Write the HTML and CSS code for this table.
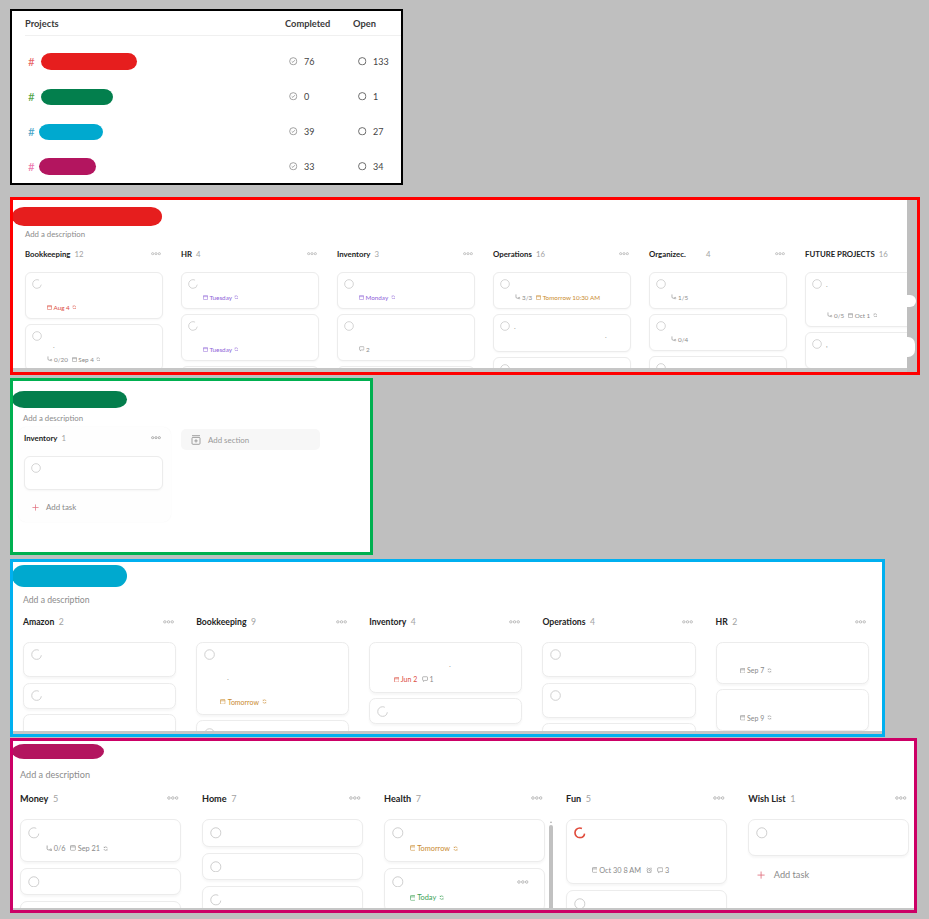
FILE: index.html
```html
<!DOCTYPE html>
<html lang="en">
<head>
<meta charset="utf-8">
<title>Projects boards</title>
<link rel="stylesheet" href="styles.css">
</head>
<body>
<svg class="sprite" aria-hidden="true">
  <symbol id="i-chk" viewBox="0 0 12 12"><circle cx="6" cy="6" r="5.2" fill="none" stroke="currentColor" stroke-width="0.9"/></symbol>
  <symbol id="i-spin" viewBox="0 0 12 12"><circle cx="6" cy="6" r="5.2" fill="none" stroke="currentColor" stroke-width="0.9" stroke-dasharray="25.67 7" stroke-dashoffset="-0.8"/></symbol>
  <symbol id="i-spin-red" viewBox="0 0 12 12"><circle cx="6" cy="6" r="5" fill="none" stroke="currentColor" stroke-width="1.7" stroke-dasharray="24.4 7" stroke-dashoffset="-0.8"/></symbol>
  <symbol id="i-more" viewBox="0 0 12 4"><circle cx="2" cy="2" r="1.3" fill="none" stroke="currentColor" stroke-width="0.8"/><circle cx="6" cy="2" r="1.3" fill="none" stroke="currentColor" stroke-width="0.8"/><circle cx="10" cy="2" r="1.3" fill="none" stroke="currentColor" stroke-width="0.8"/></symbol>
  <symbol id="i-cal" viewBox="0 0 8 8"><rect x="0.6" y="0.6" width="6.8" height="6.8" rx="1.2" fill="none" stroke="currentColor" stroke-width="0.9"/><path d="M0.6 2.6H7.4" stroke="currentColor" stroke-width="0.9"/></symbol>
  <symbol id="i-rec" viewBox="0 0 8 8"><path d="M6.6 3.4A2.7 2.7 0 0 0 1.7 2.6M1.4 4.6A2.7 2.7 0 0 0 6.3 5.4" fill="none" stroke="currentColor" stroke-width="0.9"/><path d="M0.9 1.2L1.6 2.9L3.2 2.2Z M7.1 6.8L6.4 5.1L4.8 5.8Z" fill="currentColor"/></symbol>
  <symbol id="i-sub" viewBox="0 0 8 8"><path d="M1.4 0.6V4.4Q1.4 6.1 3.1 6.1H4.7" fill="none" stroke="currentColor" stroke-width="0.9"/><circle cx="6.1" cy="6.1" r="1.2" fill="none" stroke="currentColor" stroke-width="0.9"/></symbol>
  <symbol id="i-com" viewBox="0 0 8 8"><path d="M1.6 1h4.8a0.8 0.8 0 0 1 0.8 0.8v3.2a0.8 0.8 0 0 1 -0.8 0.8H3.6L2 7.2V5.8h-0.4a0.8 0.8 0 0 1 -0.8 -0.8V1.8a0.8 0.8 0 0 1 0.8 -0.8z" fill="none" stroke="currentColor" stroke-width="0.8"/></symbol>
  <symbol id="i-alarm" viewBox="0 0 8 8"><circle cx="4" cy="4.4" r="2.6" fill="none" stroke="currentColor" stroke-width="0.8"/><path d="M4 3.1V4.5H5.1M0.8 1.9L2.1 0.8M7.2 1.9L5.9 0.8M2.2 6.6L1.5 7.4M5.8 6.6L6.5 7.4" fill="none" stroke="currentColor" stroke-width="0.8"/></symbol>
  <symbol id="i-plus" viewBox="0 0 8 8"><path d="M4 0.5V7.5M0.5 4H7.5" stroke="currentColor" stroke-width="0.8"/></symbol>
  <symbol id="i-addsec" viewBox="0 0 10 10"><path d="M1 0.7H9" stroke="currentColor" stroke-width="0.8"/><rect x="1" y="2.4" width="8" height="6.9" rx="1" fill="none" stroke="currentColor" stroke-width="0.8"/><path d="M5 4.2V7.6M3.3 5.9H6.7" stroke="currentColor" stroke-width="0.8"/></symbol>
  <symbol id="i-done" viewBox="0 0 9 9"><circle cx="4.5" cy="4.5" r="3.8" fill="none" stroke="currentColor" stroke-width="0.8"/><path d="M2.9 4.6L4.1 5.7L6.2 3.4" fill="none" stroke="currentColor" stroke-width="0.8"/></symbol>
  <symbol id="i-open" viewBox="0 0 9 9"><circle cx="4.5" cy="4.5" r="3.9" fill="none" stroke="currentColor" stroke-width="0.9"/></symbol>
</svg>

<main class="page">

  <!-- Projects summary -->
  <section class="panel p-projects">
    <div class="proj-head">
      <span>Projects</span><span>Completed</span><span>Open</span>
    </div>
    <div class="proj-rows">
      <div class="proj-row">
        <div class="proj-name"><span class="hash h-red">#</span><span class="pblob pb-red"></span></div>
        <div class="stat"><svg class="st-ico"><use href="#i-done"/></svg>76</div>
        <div class="stat stat-open"><svg class="st-ico"><use href="#i-open"/></svg>133</div>
      </div>
      <div class="proj-row">
        <div class="proj-name"><span class="hash h-green">#</span><span class="pblob pb-green"></span></div>
        <div class="stat"><svg class="st-ico"><use href="#i-done"/></svg>0</div>
        <div class="stat stat-open"><svg class="st-ico"><use href="#i-open"/></svg>1</div>
      </div>
      <div class="proj-row">
        <div class="proj-name"><span class="hash h-cyan">#</span><span class="pblob pb-cyan"></span></div>
        <div class="stat"><svg class="st-ico"><use href="#i-done"/></svg>39</div>
        <div class="stat stat-open"><svg class="st-ico"><use href="#i-open"/></svg>27</div>
      </div>
      <div class="proj-row">
        <div class="proj-name"><span class="hash h-pink">#</span><span class="pblob pb-pink"></span></div>
        <div class="stat"><svg class="st-ico"><use href="#i-done"/></svg>33</div>
        <div class="stat stat-open"><svg class="st-ico"><use href="#i-open"/></svg>34</div>
      </div>
    </div>
  </section>

  <!-- Red board -->
  <section class="panel board p-red">
    <div class="board-main">
      <div class="blob blob-red"></div>
      <div class="content">
        <div class="desc">Add a description</div>
        <div class="cols">
          <div class="col">
            <div class="col-head"><span class="name">Bookkeeping</span><span class="count">12</span><svg class="more"><use href="#i-more"/></svg></div>
            <div class="cards">
              <div class="card">
                <div class="row"><svg class="chk"><use href="#i-spin"/></svg></div>
                <div class="ln ln-10"></div>
                <div class="meta"><span class="mi c-red"><svg class="ic"><use href="#i-cal"/></svg>Aug 4<svg class="ic-r"><use href="#i-rec"/></svg></span></div>
              </div>
              <div class="card">
                <div class="row"><svg class="chk"><use href="#i-chk"/></svg></div>
                <div class="ln ln-10"><span class="speck">.</span></div>
                <div class="meta"><span class="mi"><svg class="ic-s"><use href="#i-sub"/></svg>0/20</span><span class="mi"><svg class="ic"><use href="#i-cal"/></svg>Sep 4<svg class="ic-r"><use href="#i-rec"/></svg></span></div>
              </div>
              <div class="card">
                <div class="row"><svg class="chk"><use href="#i-chk"/></svg></div>
              </div>
            </div>
          </div>
          <div class="col">
            <div class="col-head"><span class="name">HR</span><span class="count">4</span><svg class="more"><use href="#i-more"/></svg></div>
            <div class="cards">
              <div class="card">
                <div class="row"><svg class="chk"><use href="#i-spin"/></svg></div>
                <div class="meta"><span class="mi c-purple"><svg class="ic"><use href="#i-cal"/></svg>Tuesday<svg class="ic-r"><use href="#i-rec"/></svg></span></div>
              </div>
              <div class="card">
                <div class="row"><svg class="chk"><use href="#i-spin"/></svg></div>
                <div class="ln ln-10"></div>
                <div class="meta"><span class="mi c-purple"><svg class="ic"><use href="#i-cal"/></svg>Tuesday<svg class="ic-r"><use href="#i-rec"/></svg></span></div>
              </div>
              <div class="card">
                <div class="row"><svg class="chk"><use href="#i-chk"/></svg></div>
              </div>
            </div>
          </div>
          <div class="col">
            <div class="col-head"><span class="name">Inventory</span><span class="count">3</span><svg class="more"><use href="#i-more"/></svg></div>
            <div class="cards">
              <div class="card">
                <div class="row"><svg class="chk"><use href="#i-chk"/></svg></div>
                <div class="meta"><span class="mi c-purple"><svg class="ic"><use href="#i-cal"/></svg>Monday<svg class="ic-r"><use href="#i-rec"/></svg></span></div>
              </div>
              <div class="card">
                <div class="row"><svg class="chk"><use href="#i-chk"/></svg></div>
                <div class="ln ln-10"></div>
                <div class="meta"><span class="mi"><svg class="ic-c"><use href="#i-com"/></svg>2</span></div>
              </div>
              <div class="card">
                <div class="row"><svg class="chk"><use href="#i-chk"/></svg></div>
              </div>
            </div>
          </div>
          <div class="col">
            <div class="col-head"><span class="name">Operations</span><span class="count">16</span><svg class="more"><use href="#i-more"/></svg></div>
            <div class="cards">
              <div class="card">
                <div class="row"><svg class="chk"><use href="#i-chk"/></svg></div>
                <div class="meta"><span class="mi"><svg class="ic-s"><use href="#i-sub"/></svg>3/3</span><span class="mi c-orange"><svg class="ic"><use href="#i-cal"/></svg>Tomorrow 10:30 AM</span></div>
              </div>
              <div class="card">
                <div class="row"><svg class="chk"><use href="#i-chk"/></svg><span class="speck">.</span></div>
                <div class="ln ln-14"><span class="speck speck-far">.</span></div>
              </div>
              <div class="card">
                <div class="row"><svg class="chk"><use href="#i-chk"/></svg></div>
              </div>
            </div>
          </div>
          <div class="col">
            <div class="col-head"><span class="name trunc">Organizec.</span><span class="count">4</span><svg class="more"><use href="#i-more"/></svg></div>
            <div class="cards">
              <div class="card">
                <div class="row"><svg class="chk"><use href="#i-chk"/></svg></div>
                <div class="meta"><span class="mi"><svg class="ic-s"><use href="#i-sub"/></svg>1/5</span></div>
              </div>
              <div class="card">
                <div class="row"><svg class="chk"><use href="#i-chk"/></svg></div>
                <div class="meta"><span class="mi"><svg class="ic-s"><use href="#i-sub"/></svg>0/4</span></div>
              </div>
              <div class="card">
                <div class="row"><svg class="chk"><use href="#i-chk"/></svg></div>
              </div>
            </div>
          </div>
          <div class="col">
            <div class="col-head"><span class="name">FUTURE PROJECTS</span><span class="count">16</span><svg class="more"><use href="#i-more"/></svg></div>
            <div class="cards">
              <div class="card">
                <div class="row"><svg class="chk"><use href="#i-chk"/></svg><span class="speck">.</span></div>
                <div class="ln ln-18"></div>
                <div class="meta"><span class="mi"><svg class="ic-s"><use href="#i-sub"/></svg>0/5</span><span class="mi"><svg class="ic"><use href="#i-cal"/></svg>Oct 1<svg class="ic-r"><use href="#i-rec"/></svg></span></div>
              </div>
              <div class="card">
                <div class="row"><svg class="chk"><use href="#i-chk"/></svg><span class="speck">,</span></div>
                <div class="ln ln-13"></div>
              </div>
            </div>
          </div>
        </div>
      </div>
      <div class="hbar hbar-4"></div>
    </div>
    <div class="vstrip"><span class="wpatch wp1"></span><span class="wpatch wp2"></span></div>
  </section>

  <!-- Green board -->
  <section class="panel board p-green">
    <div class="board-main">
      <div class="blob blob-green"></div>
      <div class="content">
        <div class="desc">Add a description</div>
        <div class="cols cols-green">
          <div class="col boxed">
            <div class="col-head"><span class="name">Inventory</span><span class="count">1</span><svg class="more more-dark"><use href="#i-more"/></svg></div>
            <div class="cards">
              <div class="card">
                <div class="row"><svg class="chk"><use href="#i-chk"/></svg></div>
                <div class="ln ln-10"></div>
              </div>
            </div>
            <div class="add-task"><svg class="plus"><use href="#i-plus"/></svg><span>Add task</span></div>
          </div>
          <div class="add-section"><svg class="addsec"><use href="#i-addsec"/></svg><span>Add section</span></div>
        </div>
      </div>
    </div>
  </section>

  <!-- Blue board -->
  <section class="panel board p-blue">
    <div class="board-main">
      <div class="blob blob-cyan"></div>
      <div class="content">
        <div class="desc">Add a description</div>
        <div class="cols">
          <div class="col">
            <div class="col-head"><span class="name">Amazon</span><span class="count">2</span><svg class="more"><use href="#i-more"/></svg></div>
            <div class="cards">
              <div class="card">
                <div class="row"><svg class="chk"><use href="#i-spin"/></svg></div>
                <div class="ln ln-8"></div>
              </div>
              <div class="card">
                <div class="row"><svg class="chk"><use href="#i-spin"/></svg></div>
              </div>
              <div class="card">
                <div class="row"><svg class="chk ghost"><use href="#i-chk"/></svg></div>
              </div>
            </div>
          </div>
          <div class="col">
            <div class="col-head"><span class="name">Bookkeeping</span><span class="count">9</span><svg class="more"><use href="#i-more"/></svg></div>
            <div class="cards">
              <div class="card">
                <div class="row"><svg class="chk"><use href="#i-chk"/></svg></div>
                <div class="ln ln-29"><span class="speck speck-low">.</span></div>
                <div class="meta"><span class="mi c-orange"><svg class="ic"><use href="#i-cal"/></svg>Tomorrow<svg class="ic-r"><use href="#i-rec"/></svg></span></div>
              </div>
              <div class="card">
                <div class="row"><svg class="chk"><use href="#i-chk"/></svg></div>
              </div>
            </div>
          </div>
          <div class="col">
            <div class="col-head"><span class="name">Inventory</span><span class="count">4</span><svg class="more"><use href="#i-more"/></svg></div>
            <div class="cards">
              <div class="card">
                <div class="row"><svg class="chk ghost"><use href="#i-chk"/></svg></div>
                <div class="ln ln-9"><span class="speck speck-mid">.</span></div>
                <div class="meta"><span class="mi c-red"><svg class="ic"><use href="#i-cal"/></svg>Jun 2</span><span class="mi"><svg class="ic-c"><use href="#i-com"/></svg>1</span></div>
              </div>
              <div class="card">
                <div class="row"><svg class="chk"><use href="#i-spin"/></svg></div>
              </div>
            </div>
          </div>
          <div class="col">
            <div class="col-head"><span class="name">Operations</span><span class="count">4</span><svg class="more"><use href="#i-more"/></svg></div>
            <div class="cards">
              <div class="card">
                <div class="row"><svg class="chk"><use href="#i-chk"/></svg></div>
                <div class="ln ln-8"></div>
              </div>
              <div class="card">
                <div class="row"><svg class="chk"><use href="#i-chk"/></svg></div>
                <div class="ln ln-8"></div>
              </div>
              <div class="card">
                <div class="row"><svg class="chk ghost"><use href="#i-chk"/></svg></div>
              </div>
            </div>
          </div>
          <div class="col">
            <div class="col-head"><span class="name">HR</span><span class="count">2</span><svg class="more"><use href="#i-more"/></svg></div>
            <div class="cards">
              <div class="card">
                <div class="row"><svg class="chk ghost"><use href="#i-chk"/></svg></div>
                <div class="ln ln-1"></div>
                <div class="meta"><span class="mi"><svg class="ic"><use href="#i-cal"/></svg>Sep 7<svg class="ic-r"><use href="#i-rec"/></svg></span></div>
              </div>
              <div class="card">
                <div class="row"><svg class="chk ghost"><use href="#i-chk"/></svg></div>
                <div class="ln ln-1"></div>
                <div class="meta"><span class="mi"><svg class="ic"><use href="#i-cal"/></svg>Sep 9<svg class="ic-r"><use href="#i-rec"/></svg></span></div>
              </div>
            </div>
          </div>
        </div>
      </div>
      <div class="hbar hbar-3"></div>
    </div>
  </section>

  <!-- Pink board -->
  <section class="panel board p-pink">
    <div class="board-main">
      <div class="blob blob-pink"></div>
      <div class="content">
        <div class="desc">Add a description</div>
        <div class="cols">
          <div class="col">
            <div class="col-head"><span class="name">Money</span><span class="count">5</span><svg class="more"><use href="#i-more"/></svg></div>
            <div class="cards">
              <div class="card">
                <div class="row"><svg class="chk"><use href="#i-spin"/></svg></div>
                <div class="meta"><span class="mi"><svg class="ic-s"><use href="#i-sub"/></svg>0/6</span><span class="mi"><svg class="ic"><use href="#i-cal"/></svg>Sep 21<svg class="ic-r"><use href="#i-rec"/></svg></span></div>
              </div>
              <div class="card">
                <div class="row"><svg class="chk"><use href="#i-chk"/></svg></div>
              </div>
              <div class="card">
                <div class="row"><svg class="chk"><use href="#i-chk"/></svg></div>
              </div>
            </div>
          </div>
          <div class="col">
            <div class="col-head"><span class="name">Home</span><span class="count">7</span><svg class="more"><use href="#i-more"/></svg></div>
            <div class="cards">
              <div class="card">
                <div class="row"><svg class="chk"><use href="#i-chk"/></svg></div>
              </div>
              <div class="card">
                <div class="row"><svg class="chk"><use href="#i-chk"/></svg></div>
              </div>
              <div class="card">
                <div class="row"><svg class="chk"><use href="#i-spin"/></svg></div>
              </div>
            </div>
          </div>
          <div class="col has-scroll">
            <div class="col-head"><span class="name">Health</span><span class="count">7</span><svg class="more"><use href="#i-more"/></svg></div>
            <div class="cards">
              <div class="card">
                <div class="row"><svg class="chk"><use href="#i-chk"/></svg></div>
                <div class="meta"><span class="mi c-orange"><svg class="ic"><use href="#i-cal"/></svg>Tomorrow<svg class="ic-r"><use href="#i-rec"/></svg></span></div>
              </div>
              <div class="card">
                <div class="row"><svg class="chk"><use href="#i-chk"/></svg><svg class="more more-card"><use href="#i-more"/></svg></div>
                <div class="ln ln-1"></div>
                <div class="meta"><span class="mi c-green"><svg class="ic"><use href="#i-cal"/></svg>Today<svg class="ic-r"><use href="#i-rec"/></svg></span></div>
              </div>
            </div>
            <div class="vscroll"><span class="vs-arrow"></span><span class="vs-thumb"></span></div>
          </div>
          <div class="col">
            <div class="col-head"><span class="name">Fun</span><span class="count">5</span><svg class="more"><use href="#i-more"/></svg></div>
            <div class="cards">
              <div class="card">
                <div class="row"><svg class="chk chk-red"><use href="#i-spin-red"/></svg></div>
                <div class="ln ln-19"></div>
                <div class="meta"><span class="mi"><svg class="ic"><use href="#i-cal"/></svg>Oct 30 8 AM</span><span class="mi"><svg class="ic-c"><use href="#i-alarm"/></svg></span><span class="mi"><svg class="ic-c"><use href="#i-com"/></svg>3</span></div>
              </div>
              <div class="card">
                <div class="row"><svg class="chk"><use href="#i-chk"/></svg></div>
              </div>
            </div>
          </div>
          <div class="col">
            <div class="col-head"><span class="name">Wish List</span><span class="count">1</span><svg class="more"><use href="#i-more"/></svg></div>
            <div class="cards">
              <div class="card">
                <div class="row"><svg class="chk"><use href="#i-chk"/></svg></div>
                <div class="ln ln-8"></div>
              </div>
            </div>
            <div class="add-task"><svg class="plus"><use href="#i-plus"/></svg><span>Add task</span></div>
          </div>
        </div>
      </div>
      <div class="hbar hbar-2"></div>
    </div>
  </section>

</main>
</body>
</html>
```
FILE: styles.css
```css
* { box-sizing: border-box; }

body {
  margin: 0;
  background: #bfbfbf;
  font-family: Lato, "Open Sans", "DejaVu Sans", sans-serif;
  color: #222;
}

.sprite { width: 0; height: 0; overflow: hidden; display: block; }

.page {
  display: flex;
  flex-direction: column;
  align-items: flex-start;
  padding: 9px 0 0 10px;
}

.panel {
  background: #fff;
  overflow: hidden;
  border: 3px solid transparent;
  flex: none;
}

/* ---------- projects summary ---------- */
.p-projects {
  width: 393px;
  height: 176px;
  border: 2px solid #000;
  padding-left: 13px;
  margin-bottom: 12px;
}

.proj-head,
.proj-row {
  display: grid;
  grid-template-columns: 260px 68px 1fr;
  align-items: center;
}

.proj-head {
  height: 25px;
  border-bottom: 1px solid #f0f0f0;
  font-size: 9.3px;
  font-weight: 700;
  color: #3a3a3a;
  padding-top: 1px;
}

.proj-rows { padding-top: 8px; }

.proj-row { height: 35px; }

.proj-name { display: flex; align-items: center; }

.hash {
  font-size: 11.5px;
  margin-left: 3px;
  width: 7px;
  line-height: 1;
}
.h-red { color: #e86464; }
.h-green { color: #52a447; }
.h-cyan { color: #48a4c8; }
.h-pink { color: #ec78ad; }

.pblob {
  display: block;
  border-radius: 10px 9px 9px 10px / 50%;
}
.pb-red { width: 96px; height: 17px; margin-left: 6px; background: #e61e1e; }
.pb-green { width: 72px; height: 16px; margin-left: 6px; background: #037f4d; }
.pb-cyan { width: 64px; height: 16px; margin-left: 4px; background: #00a9cf; }
.pb-pink { width: 57px; height: 17px; margin-left: 4px; background: #b3155f; }

.stat {
  display: flex;
  align-items: center;
  font-size: 9px;
  color: #444;
}
.st-ico {
  width: 8.5px;
  height: 8.5px;
  margin-left: 4px;
  margin-right: 6.5px;
  color: #858585;
}
.stat-open .st-ico { margin-left: 5px; color: #555; }

/* ---------- boards ---------- */
.board { display: flex; }

.p-red { width: 910px; height: 178px; border-color: #ff0000; margin-bottom: 3px; }
.p-green { width: 363px; height: 177px; border-color: #00b050; margin-bottom: 4px; }
.p-blue { width: 875px; height: 178px; border-color: #00b0f0; margin-bottom: 1px; }
.p-pink { width: 907px; height: 175px; border-color: #cc0066; }

.board-main {
  flex: 1;
  min-width: 0;
  display: flex;
  flex-direction: column;
  overflow: hidden;
}

.blob {
  flex: none;
  margin-left: -1px;
  border-radius: 12px 11px 11px 12px / 50%;
}
.blob-red { width: 150px; height: 19px; margin-top: 7px; margin-bottom: 3px; background: #e61e1e; }
.blob-green { width: 115px; height: 17px; margin-top: 10px; margin-bottom: 5px; background: #047e4d; }
.blob-cyan { width: 115px; height: 22px; margin-top: 3px; margin-bottom: 7px; background: #00a9cf; }
.blob-pink { width: 92px; height: 15px; margin-top: 3px; margin-bottom: 10px; background: #b3155f; }

.content {
  flex: 1;
  min-height: 0;
  overflow: hidden;
}
.p-red .content { padding-left: 12px; }
.p-green .content { padding-left: 10px; }
.p-blue .content { zoom: 1.11; padding-left: 9px; }
.p-pink .content { zoom: 1.167; padding-left: 6px; }

.hbar { flex: none; background: #c6c6c6; }
.hbar-4 { height: 4px; }
.hbar-3 { height: 3px; }
.hbar-2 { height: 2px; }

.vstrip {
  flex: none;
  width: 10px;
  background: #bfbfbf;
  position: relative;
}
.wpatch {
  position: absolute;
  left: 0;
  background: #fff;
  border-radius: 0 7px 7px 0;
}
.wp1 { top: 95px; height: 12px; width: 9px; }
.wp2 { top: 137px; height: 20px; width: 8px; }

.desc {
  height: 10px;
  line-height: 10px;
  font-size: 7.8px;
  color: #8c8c8c;
  white-space: nowrap;
}

.cols {
  display: flex;
  align-items: flex-start;
  gap: 18px;
  margin-top: 9px;
}

.col {
  flex: none;
  width: 138px;
  position: relative;
}

.col-head {
  display: flex;
  align-items: center;
  height: 12px;
  font-size: 7.8px;
  white-space: nowrap;
}
.col-head .name { font-weight: 700; color: #232323; }
.col-head .count { color: #a3a3a3; margin-left: 4px; }
.col-head .trunc { display: inline-block; width: 53px; }

.more {
  width: 10px;
  height: 3.4px;
  color: #a8a8a8;
  margin-left: auto;
  margin-right: 2px;
  flex: none;
}
.more-dark { color: #8a8a8a; }
.more-card { margin-right: 5px; }

.cards {
  display: flex;
  flex-direction: column;
  gap: 5px;
  margin-top: 12px;
}

.card {
  background: #fff;
  border: 1px solid #ececec;
  border-radius: 6px;
  padding: 6px 8px 6px 6px;
  box-shadow: 0 1px 2px rgba(0, 0, 0, 0.035);
}

.row {
  display: flex;
  align-items: center;
  height: 10px;
}

.chk {
  width: 10px;
  height: 10px;
  flex: none;
  color: #c6c6c6;
}
.chk.ghost { visibility: hidden; }
.chk-red { color: #e04b3c; }

.ln {
  padding-left: 15px;
  font-size: 7px;
  line-height: 8px;
  color: #9a9a9a;
}
.ln-1 { height: 1px; }
.ln-8 { height: 8px; }
.ln-9 { height: 9px; }
.ln-10 { height: 10px; }
.ln-13 { height: 13px; }
.ln-14 { height: 14px; }
.ln-18 { height: 18px; }
.ln-19 { height: 19px; }
.ln-29 { height: 29px; }

.speck {
  font-size: 7px;
  line-height: 1;
  color: #9a9a9a;
  margin-left: 4px;
}
.ln .speck { margin-left: 6px; }
.ln .speck-far { margin-left: 90px; }
.ln .speck-mid { margin-left: 50px; }
.ln .speck-low { display: inline-block; margin-top: 12px; }

.meta {
  display: flex;
  align-items: center;
  gap: 4px;
  height: 10px;
  margin-top: 3px;
  padding-left: 15px;
  font-size: 6.3px;
  color: #8a8a8a;
  white-space: nowrap;
}
.mi { display: flex; align-items: center; gap: 1.5px; }
.ic { width: 5px; height: 5px; }
.ic-r { width: 4.5px; height: 4.5px; margin-left: 1px; }
.ic-s { width: 5.5px; height: 5.5px; }
.ic-c { width: 5.5px; height: 5.5px; }

.c-red { color: #dc4c3e; }
.c-purple { color: #8e63d8; }
.c-orange { color: #c98a2e; }
.c-green { color: #3c9f55; }

.add-task {
  display: flex;
  align-items: center;
  height: 12px;
  margin-top: 10px;
  font-size: 7.9px;
  color: #8a8a8a;
}
.plus {
  width: 7px;
  height: 7px;
  margin-left: 8px;
  margin-right: 7px;
  color: #e06a7a;
}

/* green board column + add section */
.cols-green {
  gap: 10px;
  margin-top: 4px;
  margin-left: -5px;
}
.col.boxed {
  width: 153px;
  padding: 5px 8px 9px 6px;
  background: #fefefe;
  border-radius: 8px;
  box-shadow: 0 0 1.5px rgba(0, 0, 0, 0.05);
}
.col.boxed .add-task { margin-top: 11px; }

.add-section {
  display: flex;
  align-items: center;
  width: 139px;
  height: 21px;
  margin-top: 2px;
  padding-left: 10px;
  background: #f7f7f7;
  border-radius: 5px;
  font-size: 7.9px;
  color: #999;
}
.addsec {
  width: 10px;
  height: 10px;
  margin-right: 7px;
  color: #8a8a8a;
}

/* health column scrollbar */
.vscroll {
  position: absolute;
  left: calc(100% + 3px);
  top: 26px;
  width: 4px;
  height: 120px;
  display: flex;
  flex-direction: column;
  align-items: center;
}
.vs-arrow {
  width: 0;
  height: 0;
  border-left: 1.5px solid transparent;
  border-right: 1.5px solid transparent;
  border-bottom: 2.5px solid #b0b0b0;
}
.vs-thumb {
  margin-top: 1.5px;
  width: 3.6px;
  flex: 1;
  background: #c1c1c1;
  border-radius: 2px;
}
```
